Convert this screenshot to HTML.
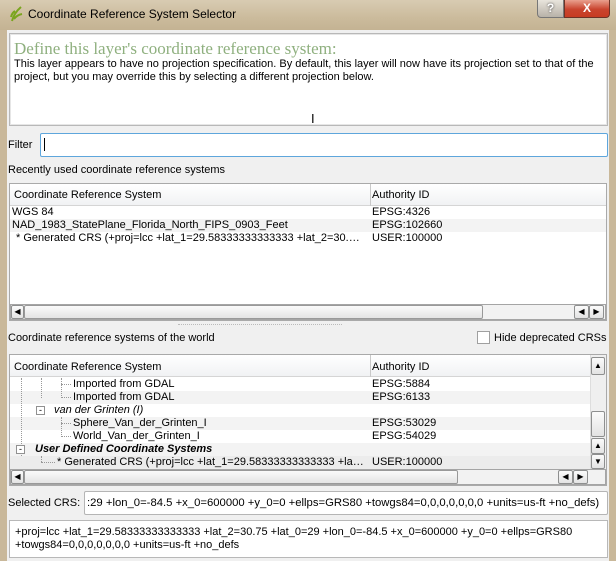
<!DOCTYPE html>
<html><head><meta charset="utf-8"><style>
*{box-sizing:border-box;margin:0;padding:0}
body{width:616px;height:561px;overflow:hidden;position:relative;background:#c9b89a;font-family:"Liberation Sans",Tahoma,sans-serif;font-size:11px;color:#000}
.a{position:absolute}
.t{position:absolute;white-space:nowrap;font-size:11px;line-height:13px}
.title{left:0;top:0;width:616px;height:30px;background:linear-gradient(#d8cbb2,#cbbb9c 60%,#c4b393)}
.body{left:7px;top:30px;width:602px;height:531px;background:#f0f0f0}
.box{background:#fff;border:1px solid #a9a9a9}
.hdr{background:linear-gradient(#fff,#f1f2f4);border-bottom:1px solid #d5d5d5}
.sb{background:#f2f2f2;border:1px solid #a5a5a5}
.btn{position:absolute;background:linear-gradient(#fbfbfb,#e3e3e3);border:1px solid #8e8f8f;border-radius:2px;font-size:8px;line-height:12px;text-align:center;color:#000}
.alt{background:#f3f3f3}
</style></head><body>
<div class="a title"></div>
<svg class="a" style="left:8px;top:5px" width="16" height="18"><path d="M4 16 Q6 8 13 2 M6 14 Q9 10 14 9 M3 12 Q4 8 7 6" stroke="#7aa51e" stroke-width="2" fill="none"/></svg>
<div class="t" style="left:28px;top:7px;font-size:12px;line-height:15px">Coordinate Reference System Selector</div>
<div class="a" style="left:537px;top:0;width:27px;height:18px;background:linear-gradient(#e8e4dc,#b8b2a8);border:1px solid #777;border-top:0;border-radius:0 0 0 4px;color:#fff;font-weight:bold;text-align:center;font-size:12px;line-height:16px;text-shadow:0 0 2px #333">?</div>
<div class="a" style="left:564px;top:0;width:46px;height:18px;background:linear-gradient(#e9a08e,#c9442e 55%,#c73c22);border:1px solid #6d3326;border-top:0;border-radius:0 0 4px 0;color:#fff;font-weight:bold;text-align:center;font-size:12px;line-height:16px">X</div>
<div class="a body"></div>
<div class="a box" style="left:9px;top:33px;width:599px;height:93px;border-color:#b8b8b8;box-shadow:inset 0 0 0 1px #e6e6e6"></div>
<div class="t" style="left:14px;top:39px;font-family:'Liberation Serif',serif;font-size:17px;line-height:19px;color:#8fb07f">Define this layer's coordinate reference system:</div>
<div class="t" style="left:14px;top:58px;font-size:11px">This layer appears to have no projection specification. By default, this layer will now have its projection set to that of the<br>project, but you may override this by selecting a different projection below.</div>
<div class="t" style="left:311px;top:112px;font-size:13px">I</div>
<div class="t" style="left:8px;top:139px">Filter</div>
<div class="a" style="left:40px;top:133px;width:568px;height:24px;background:#fff;border:1px solid #5ea6dc;border-radius:2px"></div>
<div class="a" style="left:44px;top:138px;width:1px;height:13px;background:#000"></div>
<div class="t" style="left:8px;top:164px">Recently used coordinate reference systems</div>
<div class="a box" style="left:9px;top:183px;width:598px;height:138px"></div>
<div class="a hdr" style="left:10px;top:184px;width:596px;height:22px"></div>
<div class="a" style="left:370px;top:184px;width:1px;height:22px;background:#c9c9c9"></div>
<div class="t" style="left:14px;top:189px">Coordinate Reference System</div>
<div class="t" style="left:372px;top:189px">Authority ID</div>
<div class="a alt" style="left:10px;top:219px;width:596px;height:13px"></div>
<div class="t" style="left:12px;top:206px">WGS 84</div><div class="t" style="left:372px;top:206px">EPSG:4326</div>
<div class="t" style="left:12px;top:219px">NAD_1983_StatePlane_Florida_North_FIPS_0903_Feet</div><div class="t" style="left:372px;top:219px">EPSG:102660</div>
<div class="t" style="left:16px;top:232px">* Generated CRS (+proj=lcc +lat_1=29.58333333333333 +lat_2=30.…</div><div class="t" style="left:372px;top:232px">USER:100000</div>
<div class="a sb" style="left:10px;top:304px;width:596px;height:16px"></div>
<div class="btn" style="left:11px;top:305px;width:13px;height:14px">◀</div>
<div class="a" style="left:24px;top:305px;width:459px;height:14px;background:linear-gradient(#fafafa,#e4e4e4);border:1px solid #999;border-radius:2px"></div>
<div class="btn" style="left:574px;top:305px;width:15px;height:14px">◀</div>
<div class="btn" style="left:589px;top:305px;width:15px;height:14px">▶</div>
<div class="a" style="left:178px;top:324px;width:164px;height:2px;border-top:1px dotted #bbb"></div>
<div class="t" style="left:8px;top:332px">Coordinate reference systems of the world</div>
<div class="a" style="left:477px;top:331px;width:13px;height:13px;background:#fff;border:1px solid #a0a0a0"></div>
<div class="t" style="left:494px;top:332px">Hide deprecated CRSs</div>
<div class="a box" style="left:9px;top:354px;width:598px;height:132px"></div>
<div class="a hdr" style="left:10px;top:355px;width:580px;height:22px"></div>
<div class="a" style="left:370px;top:355px;width:1px;height:22px;background:#c9c9c9"></div>
<div class="t" style="left:14px;top:361px">Coordinate Reference System</div>
<div class="t" style="left:372px;top:361px">Authority ID</div>
<div class="a alt" style="left:10px;top:391px;width:580px;height:13px"></div>
<div class="a alt" style="left:10px;top:417px;width:580px;height:13px"></div>
<div class="a alt" style="left:10px;top:443px;width:580px;height:13px"></div>
<div class="a alt" style="left:10px;top:456px;width:580px;height:13px;background:#ececec"></div>
<div class="a" style="left:21px;top:378px;width:0;height:78px;border-left:1px dotted #999"></div>
<div class="a" style="left:41px;top:378px;width:0;height:20px;border-left:1px dotted #999"></div>
<div class="a" style="left:61px;top:378px;width:0;height:20px;border-left:1px dotted #999"></div>
<div class="a" style="left:61px;top:384px;width:10px;border-top:1px dotted #999"></div>
<div class="a" style="left:61px;top:397px;width:10px;border-top:1px dotted #999"></div>
<div class="a" style="left:61px;top:417px;width:0;height:20px;border-left:1px dotted #999"></div>
<div class="a" style="left:61px;top:423px;width:10px;border-top:1px dotted #999"></div>
<div class="a" style="left:61px;top:436px;width:10px;border-top:1px dotted #999"></div>
<div class="a" style="left:41px;top:456px;width:0;height:6px;border-left:1px dotted #999"></div>
<div class="a" style="left:41px;top:462px;width:14px;border-top:1px dotted #999"></div>
<div class="a" style="left:36px;top:406px;width:9px;height:9px;background:#fff;border:1px solid #919191;font-size:9px;line-height:6px;text-align:center">-</div>
<div class="a" style="left:16px;top:445px;width:9px;height:9px;background:#fff;border:1px solid #919191;font-size:9px;line-height:6px;text-align:center">-</div>
<div class="t" style="left:73px;top:378px">Imported from GDAL</div><div class="t" style="left:372px;top:378px">EPSG:5884</div>
<div class="t" style="left:73px;top:391px">Imported from GDAL</div><div class="t" style="left:372px;top:391px">EPSG:6133</div>
<div class="t" style="left:54px;top:404px;font-style:italic">van der Grinten (I)</div>
<div class="t" style="left:73px;top:417px">Sphere_Van_der_Grinten_I</div><div class="t" style="left:372px;top:417px">EPSG:53029</div>
<div class="t" style="left:73px;top:430px">World_Van_der_Grinten_I</div><div class="t" style="left:372px;top:430px">EPSG:54029</div>
<div class="t" style="left:35px;top:443px;font-style:italic;font-weight:bold">User Defined Coordinate Systems</div>
<div class="t" style="left:57px;top:456px">* Generated CRS (+proj=lcc +lat_1=29.58333333333333 +la…</div><div class="t" style="left:372px;top:456px">USER:100000</div>
<div class="a" style="left:590px;top:355px;width:16px;height:114px;background:#efefef;border-left:1px solid #ddd"></div>
<div class="btn" style="left:591px;top:357px;width:14px;height:18px;line-height:16px">▲</div>
<div class="btn" style="left:591px;top:411px;width:14px;height:26px"></div>
<div class="btn" style="left:591px;top:438px;width:14px;height:16px;line-height:14px">▲</div>
<div class="btn" style="left:591px;top:454px;width:14px;height:15px;line-height:13px">▼</div>
<div class="a sb" style="left:10px;top:469px;width:596px;height:16px"></div>
<div class="btn" style="left:11px;top:470px;width:13px;height:14px">◀</div>
<div class="a" style="left:24px;top:470px;width:434px;height:14px;background:linear-gradient(#fafafa,#e4e4e4);border:1px solid #999;border-radius:2px"></div>
<div class="btn" style="left:558px;top:470px;width:15px;height:14px">◀</div>
<div class="btn" style="left:573px;top:470px;width:15px;height:14px">▶</div>
<div class="t" style="left:8px;top:497px">Selected CRS:</div>
<div class="a" style="left:84px;top:491px;width:524px;height:24px;background:#fff;border:1px solid #b5b5b5;border-radius:2px"></div>
<div class="t" style="left:87px;top:497px;font-size:11.3px">:29 +lon_0=-84.5 +x_0=600000 +y_0=0 +ellps=GRS80 +towgs84=0,0,0,0,0,0,0 +units=us-ft +no_defs)</div>
<div class="a box" style="left:9px;top:520px;width:599px;height:38px;border-color:#b8b8b8"></div>
<div class="t" style="left:15px;top:526px">+proj=lcc +lat_1=29.58333333333333 +lat_2=30.75 +lat_0=29 +lon_0=-84.5 +x_0=600000 +y_0=0 +ellps=GRS80<br>+towgs84=0,0,0,0,0,0,0 +units=us-ft +no_defs</div>
</body></html>
